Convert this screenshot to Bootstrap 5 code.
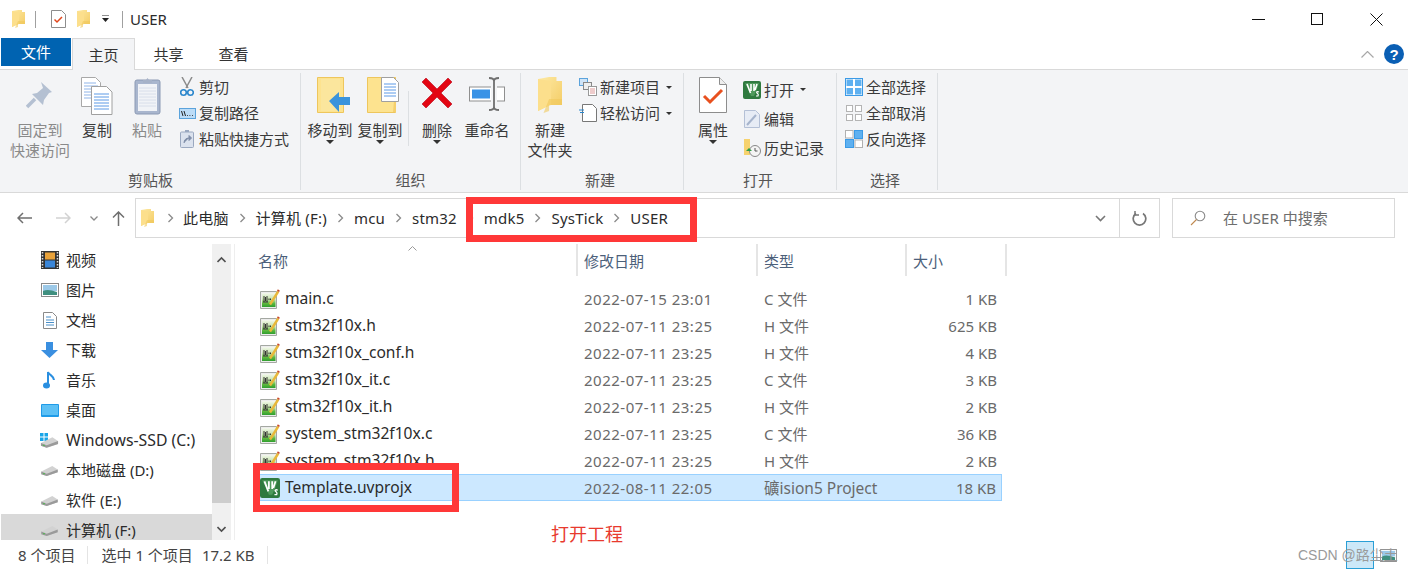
<!DOCTYPE html>
<html lang="zh-CN">
<head>
<meta charset="UTF-8">
<title>USER</title>
<link rel="stylesheet" href="https://cdn.jsdelivr.net/npm/bootstrap@5.3.0/dist/css/bootstrap.min.css">
<style>
html, body { width: 1408px; height: 571px; overflow: hidden; }
body { background: #fff; color: #2b2b2b; font: 15px/20px "Noto Sans", "Noto Sans CJK SC", sans-serif; position: relative; }
svg { display: block; flex: none; }
.sprite { position: absolute; }
.title-bar { height: 38px; padding-left: 12px; }
.title-sep { width: 1px; height: 17px; background: #a0a0a0; }
.sep-a { margin-left: 10px; }
.t-note { margin-left: 15px; }
.t-fold { margin-left: 11px; }
.t-caret { margin-left: 11px; }
.sep-b { margin-left: 12px; }
.t-name { margin-left: 7px; }
.win-group { padding-right: 2px; }
.win-btn { width: 59px; }
.tab-bar { height: 32px; position: relative; }
.tab-file { width: 70px; height: 28px; margin-left: 1px; background: #0063b1; color: #fff; }
.tab-item { width: 65px; height: 32px; color: #333; }
.tab-home { width: 63px; margin-left: 1px; background: #f3f4f6; border: 1px solid #d9d9d9; border-bottom: 0; position: relative; z-index: 1; }
.tab-share { margin-left: 1px; }
.tab-tools { height: 32px; padding-right: 4px; gap: 10px; }
.ribbon { height: 124px; background: #f3f4f6; border-top: 1px solid #d9d9d9; border-bottom: 1px solid #d9d9d9; margin-top: -1px; padding: 3px 0 2px 1px; }
.rb-group { border-right: 1px solid #dcdfe2; height: 117px; }
.rb-body { height: 97px; padding-left: 4px; }
.body-g1 { padding-left: 9px; }
.rb-label { color: #555; line-height: 20px; height: 20px; }
.label-left { padding-right: 4px; }
.g1 { width: 300px; } .g2 { width: 220px; } .g3 { width: 163px; } .g4 { width: 153px; } .g5 { width: 101px; }
.big-btn { width: 50px; padding-top: 4px; line-height: 20px; text-align: center; color: #3a3a3a; white-space: nowrap; }
.big-icon { height: 40px; margin-bottom: 3px; }
.w60 { width: 60px; } .w54 { width: 54px; } .w46 { width: 46px; }
.off { color: #8a8a8a; }
.pin-ico { margin-top: 3px; }
.nudge { margin-left: 6px; }
.down-caret { width: 0; height: 0; margin: 0 auto; border: 4px solid transparent; border-top-color: #333; border-bottom: 0; }
.rb-sep { width: 1px; height: 55px; background: #dcdfe2; margin: 18px 3px 0; }
.sm-col { padding-top: 1px; white-space: nowrap; }
.sm-item { height: 26px; color: #3a3a3a; gap: 1px; }
.sm-col.sm-tall { padding-top: 2px; }
.sm-tall .sm-item { height: 29px; }
.sm-ico { width: 22px; }
.pl-g1 { padding-left: 6px; } .pl-g3 { padding-left: 2px; } .pl-g4 { padding-left: 3px; } .pl-g5 { padding-left: 2px; }
.small-caret { width: 0; height: 0; margin-left: 5px; border: 3.5px solid transparent; border-top-color: #333; border-bottom: 0; }
.addr-row { height: 51px; padding-top: 5px; }
.nav-arrows { width: 135px; height: 40px; padding-left: 17px; }
.arrow-fwd { margin-left: 24px; }
.arrow-down { margin-left: 19px; }
.arrow-up { margin-left: 14px; }
.addr-box { width: 1025px; height: 40px; border: 1px solid #d9d9d9; }
.crumb { gap: 10px; padding-left: 5px; color: #2b2b2b; white-space: nowrap; letter-spacing: .2px; }
.crumb-fold { margin-right: 3px; }
.crumb-first { margin-left: -1px; }
.addr-drop { margin-right: 13px; }
.addr-end { width: 40px; height: 38px; border-left: 1px solid #d9d9d9; }
.search-box { width: 223px; height: 40px; margin-left: 12px; border: 1px solid #d9d9d9; color: #6d6d6d; padding-left: 17px; gap: 17px; }
.main-area { height: 296px; }
.nav-pane { width: 231px; height: 296px; overflow: hidden; }
.nav-list { width: 212px; }
.nav-row { height: 30px; padding: 2px 0 0 41px; gap: 5px; white-space: nowrap; }
.nav-icon { width: 20px; }
.ni-in { margin-left: 2px; }
.ni-out { margin-left: -1px; }
.nav-sel { background: #d9d9d9; margin-left: 1px; padding-left: 40px; }
.ls-wide { font-size: 15.8px; }
.nav-scroll { width: 19px; background: #f0f0f0; padding-top: 186px; position: relative; }
.nav-thumb { height: 73px; background: #cdcdcd; }
.scroll-arrow { position: absolute; left: 5px; width: 9px; height: 9px; }
.sa-top { top: 11px; }
.sa-bot { top: 281px; }
.pane-line { width: 1px; background: #eee; margin-left: 3px; }
.file-pane { margin-left: 19px; width: 760px; position: relative; }
.file-head { display: grid; grid-template-columns: 324px 180px 149px 100px; height: 32px; margin-bottom: 9px; color: #4c607a; }
.fh-cell { height: 32px; line-height: 34px; border-right: 2px solid #e5e5e5; padding-left: 6px; }
.fh-cell.first { padding-left: 4px; }
.file-grid { display: grid; grid-template-columns: 323px 180px 149px 96px; width: 748px; }
.sort-up { position: absolute; left: 154px; top: 2px; }
.file-row { display: contents; }
.file-row > div { height: 27px; line-height: 29px; white-space: nowrap; color: #6a6a6a; padding-left: 7px; }
.file-row > .name-cell { color: #2b2b2b; padding-left: 6px; display: flex; align-items: center; gap: 5px; font-size: 15.6px; }
.file-row > .date-cell { letter-spacing: .5px; }
.file-row > .type-wide { font-size: 15.5px; }
.file-row > .size-cell { text-align: right; padding-right: 5px; }
.row-sel > div { background: #cce8ff; border-top: 1px solid #99d1ff; border-bottom: 1px solid #99d1ff; line-height: 27px; }
.row-sel > div:last-child { border-right: 1px solid #99d1ff; }
.row-sel > .name-cell { border-left: 1px solid #99d1ff; padding-left: 5px; }
.status-bar { height: 30px; padding-left: 18px; color: #444; white-space: nowrap; }
.status-sep { width: 1px; height: 18px; background: #e4e4e4; }
.ss-a { margin: 0 13px 0 12px; }
.ss-b { margin-left: 12px; }
.st-size { margin-left: 9px; }
.red-frame { position: absolute; border: 7px solid #ff3838; z-index: 5; }
.frame-addr { left: 466px; top: 197px; width: 231px; height: 45px; }
.frame-file { left: 253px; top: 463px; width: 206px; height: 49px; }
.open-note { position: absolute; left: 551px; top: 523px; color: #e83a2e; font-size: 18px; line-height: 22px; z-index: 5; }
.mark-text { position: absolute; left: 1298px; top: 546px; color: #9a9a9a; font: 14px/18px "Liberation Sans", "Noto Sans CJK SC", sans-serif; z-index: 6; }
.mark-thumb { position: absolute; left: 1346px; top: 541px; width: 28px; height: 28px; background: #cce8f8; border: 1px solid #2a9fd6; z-index: 5; }
.mark-pic { position: absolute; left: 1380px; top: 549px; z-index: 5; }
</style>
</head>
<body>

<svg class="sprite" width="0" height="0">
  <defs>
    <linearGradient id="gFold" x1="0" y1="0" x2="1" y2="1"><stop offset="0" stop-color="#fdeaa6"/><stop offset="1" stop-color="#f4cb62"/></linearGradient>
    <linearGradient id="gSrc" x1="0" y1="0" x2="0" y2="1"><stop offset="0" stop-color="#f4f8ee"/><stop offset=".45" stop-color="#c4e3a8"/><stop offset=".75" stop-color="#5cb83e"/><stop offset="1" stop-color="#2f9e2f"/></linearGradient>
    <symbol id="i-fold" viewBox="0 0 13 18"><path d="M0 1 6 0h4v2h3v12H6l-6 3z" fill="url(#gFold)"/><path d="M7 2 0 1v16l7-3z" fill="#fcdf8c"/><path d="M13 11v3H6v3l-3 1 3-7z" fill="#f0c85c" opacity=".6"/></symbol>
    <symbol id="i-src" viewBox="0 0 20 20"><path d="M.5 2.500h16v17H.5z" fill="#ececec" stroke="#a4a8a2"/><rect x="2" y="4" width="13.500" height="14" fill="url(#gSrc)"/><path d="M4 7v6M5.500 8v4M7 7v6M9 9.500v1.500M10.500 9.500v1.500" stroke="#333"/><path d="M3 13h5" stroke="#333"/><path d="M10 15.500 18.200 2.500" stroke="#e8b83a" stroke-width="2.400"/><path d="M18 2.400l.9-1.400" stroke="#c74a2a" stroke-width="2.400"/></symbol>
    <symbol id="i-keil" viewBox="0 0 18 18"><rect width="18" height="18" rx="2" fill="#2f7a3f"/><path d="M2 2h14l-2 6-3 7H8L5 8z" fill="#4f9a5c"/><path d="M4 3l3.500 9M8 3v7M11 3v7M14 3l-2 6" stroke="#fff" stroke-width="1.600" fill="none"/><path d="M16 11c-2-1-3 0-2 1s2 1 1 3h-2" stroke="#fff" stroke-width="1.200" fill="none"/></symbol>
    <symbol id="i-drive" viewBox="0 0 20 12"><path d="M1 7 13 1l6 4v3L7 12 1 10z" fill="#d2d2d2"/><path d="M1 7 7 9.500 19 5v3L7 12 1 10z" fill="#9a9a9a"/><path d="M3 9.500h2" stroke="#3fbf3f"/></symbol>
    <symbol id="i-chev" viewBox="0 0 7 10"><path d="M1.500 1l4 4-4 4" fill="none" stroke="#8a8a8a" stroke-width="1.300"/></symbol>
  </defs>
</svg>

<div class="title-bar d-flex align-items-center">
  <svg width="13" height="18"><use href="#i-fold"/></svg>
  <div class="title-sep sep-a"></div>
  <svg class="t-note" width="15" height="18" viewBox="0 0 15 18"><path d="M.500.500h10l4 4v13H.500z" fill="#fff" stroke="#8d8d8d"/><path d="M3.500 9.500l2.500 2.500 5-5" stroke="#e0461c" stroke-width="1.500" fill="none"/></svg>
  <svg class="t-fold" width="13" height="18"><use href="#i-fold"/></svg>
  <svg class="t-caret" width="9" height="8" viewBox="0 0 9 8"><path d="M1 0h7" stroke="#222"/><path d="M1 3h7L4.500 7z" fill="#222"/></svg>
  <div class="title-sep sep-b"></div>
  <span class="t-name">USER</span>
  <div class="ms-auto d-flex align-items-center win-group">
    <div class="win-btn d-flex justify-content-center"><svg width="13" height="13" viewBox="0 0 13 13"><path d="M0 6.500h13" stroke="#111"/></svg></div>
    <div class="win-btn d-flex justify-content-center"><svg width="13" height="13" viewBox="0 0 13 13"><rect x=".5" y=".5" width="11" height="11" fill="none" stroke="#111"/></svg></div>
    <div class="win-btn d-flex justify-content-center"><svg width="13" height="13" viewBox="0 0 13 13"><path d="M.500.500l12 12M12.500.500l-12 12" stroke="#111"/></svg></div>
  </div>
</div>

<div class="tab-bar d-flex align-items-start">
  <div class="tab-file d-flex align-items-center justify-content-center">文件</div>
  <div class="tab-item tab-home d-flex align-items-center justify-content-center">主页</div>
  <div class="tab-item tab-share d-flex align-items-center justify-content-center">共享</div>
  <div class="tab-item d-flex align-items-center justify-content-center">查看</div>
  <div class="ms-auto d-flex align-items-center tab-tools">
    <svg width="13" height="7" viewBox="0 0 13 7"><path d="M.500 6.500l6-6 6 6" fill="none" stroke="#a8a8a8" stroke-width="1.200"/></svg>
    <svg width="20" height="20" viewBox="0 0 20 20"><circle cx="10" cy="10" r="10" fill="#0a5fb4"/><text x="10" y="15.500" text-anchor="middle" fill="#fff" font-family="Liberation Sans" font-weight="700" font-size="15">?</text></svg>
  </div>
</div>

<div class="ribbon d-flex">
  <div class="rb-group g1 d-flex flex-column">
    <div class="rb-body body-g1 d-flex">
      <div class="big-btn w60 off">
        <div class="big-icon d-flex justify-content-center"><svg class="pin-ico" width="28" height="30" viewBox="0 0 28 30"><path d="M15 2l11 10-3 1-5 7-1 5L6 14l5-1 6-5z" fill="#b4c0d2"/><path d="M9 19 1 27" stroke="#b4c0d2" stroke-width="3.500"/></svg></div>
        固定到<br>快速访问
      </div>
      <div class="big-btn w54">
        <div class="big-icon d-flex justify-content-center"><svg width="32" height="38" viewBox="0 0 32 38"><path d="M.500.500h14l5 5v24H.500z" fill="#fff" stroke="#a8a8a8"/><path d="M3 6h12M3 9h14M3 12h14M3 15h14M3 18h14M3 21h14" stroke="#8fb4e8"/><path d="M10.500 9.500h15l5.500 5.500v22.500H10.500z" fill="#fff" stroke="#a0a0a0"/><path d="M13 17h15M13 20h15M13 23h15M13 26h15M13 29h15M13 32h15" stroke="#5d9ae6"/></svg></div>
        复制
      </div>
      <div class="big-btn w46 off">
        <div class="big-icon d-flex justify-content-center"><svg width="27" height="38" viewBox="0 0 27 38"><rect x="1" y="3" width="25" height="34" rx="2" fill="#a9b6ce" stroke="#8c9ab4"/><rect x="4" y="7" width="19" height="27" fill="#f1f3f7"/><path d="M5 11h17M5 14h17M5 17h17M5 20h17M5 23h17M5 26h17M5 29h17" stroke="#d8deea"/><path d="M9 6V3h3l1.500-2 1.500 2h3v3z" fill="#a6b2c8"/></svg></div>
        粘贴
      </div>
      <div class="sm-col pl-g1">
        <div class="sm-item d-flex align-items-center"><div class="sm-ico d-flex justify-content-center"><svg width="14" height="20" viewBox="0 0 14 20"><path d="M2 0l6 11M12 0 6 11" stroke="#8a8a8a" stroke-width="1.500"/><circle cx="3.500" cy="15.500" r="2.800" fill="none" stroke="#2a86cc" stroke-width="1.600"/><circle cx="10.500" cy="15.500" r="2.800" fill="none" stroke="#2a86cc" stroke-width="1.600"/></svg></div>剪切</div>
        <div class="sm-item d-flex align-items-center"><div class="sm-ico d-flex justify-content-center"><svg width="17" height="11" viewBox="0 0 17 11"><rect x=".5" y=".5" width="16" height="10" fill="#bcdcf7" stroke="#5ba3dc"/><path d="M2.500 3l1.500 5M5 3l1.500 5M8 7.500h.8M10.500 7.500h.8M13 7.500h.8" stroke="#222"/></svg></div>复制路径</div>
        <div class="sm-item d-flex align-items-center off"><div class="sm-ico d-flex justify-content-center"><svg width="14" height="18" viewBox="0 0 14 18"><rect x=".5" y="2" width="13" height="15.500" rx="1" fill="#dbe2ee" stroke="#9aa8c0"/><path d="M5 2V0h4v2" fill="#9aa8c0"/><path d="M4 13c0-3 2-5 5-5M9 5.500v5l2.500-2.500z" stroke="#7f8da8" fill="#7f8da8"/></svg></div>粘贴快捷方式</div>
      </div>
    </div>
    <div class="rb-label text-center">剪贴板</div>
  </div>

  <div class="rb-group g2 d-flex flex-column">
    <div class="rb-body d-flex">
      <div class="big-btn">
        <div class="big-icon d-flex justify-content-center"><svg class="nudge" width="33" height="38" viewBox="0 0 33 38"><path d="M.500.500h26v35H.500z" fill="#fde38f" stroke="#eec65c"/><path d="M4 2h19v32H4z" fill="#fbe69d"/><path d="M12 24 22 15v5h11v8H22v7z" fill="#3a93dc"/></svg></div>
        移动到<div class="down-caret"></div>
      </div>
      <div class="big-btn">
        <div class="big-icon d-flex justify-content-center"><svg class="nudge" width="33" height="38" viewBox="0 0 33 38"><path d="M.500.500h28v35H.500z" fill="#fde38f" stroke="#eec65c"/><path d="M27 24c2-3 3-1 2 2v9h-3z" fill="#f5cf6c"/><path d="M14.500.500h12l5 5v19h-17z" fill="#fff" stroke="#a0a0a0"/><path d="M17 7h12M17 10h12M17 13h12M17 16h12M17 19h12" stroke="#5d9ae6"/></svg></div>
        复制到<div class="down-caret"></div>
      </div>
      <div class="rb-sep"></div>
      <div class="big-btn">
        <div class="big-icon d-flex justify-content-center"><svg width="32" height="32" viewBox="0 0 32 32"><path d="M5 1l11 11L27 1l4 4-11 11 11 11-4 4-11-11L5 31l-4-4 11-11L1 5z" fill="#e30613" stroke="#b9071a" stroke-width=".6"/></svg></div>
        删除<div class="down-caret"></div>
      </div>
      <div class="big-btn">
        <div class="big-icon d-flex justify-content-center"><svg width="36" height="34" viewBox="0 0 36 34"><rect x=".5" y="10" width="35" height="14" fill="#fff" stroke="#8f8f8f"/><rect x="3" y="12.500" width="18" height="9" fill="#3a93e6"/><rect x="22" y="3" width="6" height="28" fill="#f3f4f6"/><path d="M20 1c3 0 5 1 5 3v26c0 2 2 3 5 3M30 1c-3 0-5 1-5 3M20 33c3 0 5-1 5-3" fill="none" stroke="#6f6f6f" stroke-width="1.800"/></svg></div>
        重命名
      </div>
    </div>
    <div class="rb-label text-center">组织</div>
  </div>

  <div class="rb-group g3 d-flex flex-column">
    <div class="rb-body d-flex">
      <div class="big-btn">
        <div class="big-icon d-flex justify-content-center"><svg width="24" height="36" viewBox="0 0 13 18" preserveAspectRatio="none"><use href="#i-fold"/></svg></div>
        新建<br>文件夹
      </div>
      <div class="sm-col pl-g3">
        <div class="sm-item d-flex align-items-center"><div class="sm-ico d-flex justify-content-center"><svg width="18" height="18" viewBox="0 0 18 18"><rect x=".5" y=".5" width="8" height="7" fill="#cfe4f7" stroke="#5ba3dc"/><rect x="4.500" y="4.500" width="8" height="7" fill="#eee" stroke="#888"/><rect x="9.500" y="8.500" width="8" height="9" fill="#fff" stroke="#999"/><path d="M11 11h5M11 13h5M11 15h5" stroke="#d99"/></svg></div>新建项目<div class="small-caret"></div></div>
        <div class="sm-item d-flex align-items-center"><div class="sm-ico d-flex justify-content-center"><svg width="18" height="18" viewBox="0 0 18 18"><path d="M3.500.500h10l4 4v13h-14z" fill="#fff" stroke="#777"/><path d="M0 6h5M1 8.500h4" stroke="#2a86cc"/></svg></div>轻松访问<div class="small-caret"></div></div>
      </div>
    </div>
    <div class="rb-label label-left text-center">新建</div>
  </div>

  <div class="rb-group g4 d-flex flex-column">
    <div class="rb-body d-flex">
      <div class="big-btn">
        <div class="big-icon d-flex justify-content-center"><svg width="28" height="36" viewBox="0 0 28 36"><path d="M.500.500h20l7 7v28H.500z" fill="#fff" stroke="#8d8d8d"/><path d="M20.500.500v7h7" fill="#eee" stroke="#8d8d8d"/><path d="M5 19l6 6 12-12" stroke="#e8501f" stroke-width="3" fill="none"/></svg></div>
        属性<div class="down-caret"></div>
      </div>
      <div class="sm-col sm-tall pl-g4">
        <div class="sm-item d-flex align-items-center"><div class="sm-ico d-flex justify-content-center"><svg width="18" height="18"><use href="#i-keil"/></svg></div>打开<div class="small-caret"></div></div>
        <div class="sm-item d-flex align-items-center off"><div class="sm-ico d-flex justify-content-center"><svg width="16" height="18" viewBox="0 0 16 18"><path d="M.500.500h11l4 4v13H.500z" fill="#e7ecf5" stroke="#b4c0d6"/><path d="M3 15 12 5" stroke="#a6b4cc" stroke-width="2"/></svg></div>编辑</div>
        <div class="sm-item d-flex align-items-center"><div class="sm-ico d-flex justify-content-center"><svg width="17" height="18" viewBox="0 0 17 18"><path d="M0 0h6v16H0z" fill="#f6d26e"/><circle cx="11" cy="12" r="5.500" fill="#f4f4f4" stroke="#888"/><path d="M11 9v3h2.500" stroke="#555" fill="none"/><path d="M2 12l3-3 3 3z" fill="#2f9e44"/></svg></div>历史记录</div>
      </div>
    </div>
    <div class="rb-label label-left text-center">打开</div>
  </div>

  <div class="rb-group g5 d-flex flex-column">
    <div class="rb-body d-flex">
      <div class="sm-col pl-g5">
        <div class="sm-item d-flex align-items-center"><div class="sm-ico d-flex justify-content-center"><svg width="18" height="18" viewBox="0 0 18 18"><rect x=".5" y=".5" width="17" height="17" fill="#fff" stroke="#3b9ae6"/><rect x="1.500" y="1.500" width="6.500" height="6.500" fill="#5eb0f0"/><rect x="10" y="1.500" width="6.500" height="6.500" fill="#5eb0f0"/><rect x="1.500" y="10" width="6.500" height="6.500" fill="#5eb0f0"/><rect x="10" y="10" width="6.500" height="6.500" fill="#5eb0f0"/></svg></div>全部选择</div>
        <div class="sm-item d-flex align-items-center"><div class="sm-ico d-flex justify-content-center"><svg width="18" height="18" viewBox="0 0 18 18" fill="#fff" stroke="#b4b4b4"><rect x="1.500" y="1.500" width="6" height="6"/><rect x="10.500" y="1.500" width="6" height="6"/><rect x="1.500" y="10.500" width="6" height="6"/><rect x="10.500" y="10.500" width="6" height="6"/></svg></div>全部取消</div>
        <div class="sm-item d-flex align-items-center"><div class="sm-ico d-flex justify-content-center"><svg width="18" height="18" viewBox="0 0 18 18"><rect x=".5" y=".5" width="7.500" height="7.500" fill="#fff" stroke="#b0b0b0"/><rect x="9.500" y=".5" width="8" height="8" fill="#5eb0f0" stroke="#3b9ae6"/><rect x=".5" y="9.500" width="8" height="8" fill="#5eb0f0" stroke="#3b9ae6"/><rect x="10" y="10" width="7.500" height="7.500" fill="#fff" stroke="#b0b0b0"/></svg></div>反向选择</div>
      </div>
    </div>
    <div class="rb-label label-left text-center">选择</div>
  </div>
</div>

<div class="addr-row d-flex">
  <div class="nav-arrows d-flex align-items-center">
    <svg width="15" height="12" viewBox="0 0 15 12"><path d="M15 6H1M6 1 1 6l5 5" fill="none" stroke="#6f6f6f" stroke-width="1.500"/></svg>
    <svg class="arrow-fwd" width="15" height="12" viewBox="0 0 15 12"><path d="M0 6h14M9 1l5 5-5 5" fill="none" stroke="#d2d2d2" stroke-width="1.500"/></svg>
    <svg class="arrow-down" width="8" height="5" viewBox="0 0 8 5"><path d="M.500.500 4 4 7.500.500" fill="none" stroke="#8a8a8a" stroke-width="1.300"/></svg>
    <svg class="arrow-up" width="13" height="15" viewBox="0 0 13 15"><path d="M6.500 15V1M1 6.500l5.500-5.500 5.500 5.500" fill="none" stroke="#6f6f6f" stroke-width="1.500"/></svg>
  </div>
  <div class="addr-box d-flex align-items-center">
    <div class="crumb d-flex align-items-center flex-grow-1">
      <svg class="crumb-fold" width="13" height="18"><use href="#i-fold"/></svg>
      <svg width="7" height="10"><use href="#i-chev"/></svg>
      <span class="crumb-first">此电脑</span>
      <svg width="7" height="10"><use href="#i-chev"/></svg>
      <span>计算机 (F:)</span>
      <svg width="7" height="10"><use href="#i-chev"/></svg>
      <span>mcu</span>
      <svg width="7" height="10"><use href="#i-chev"/></svg>
      <span>stm32</span>
      <svg width="7" height="10"><use href="#i-chev"/></svg>
      <span>mdk5</span>
      <svg width="7" height="10"><use href="#i-chev"/></svg>
      <span>SysTick</span>
      <svg width="7" height="10"><use href="#i-chev"/></svg>
      <span>USER</span>
    </div>
    <svg class="addr-drop" width="11" height="7" viewBox="0 0 11 7"><path d="M1 1l4.500 4.500L10 1" fill="none" stroke="#777" stroke-width="1.600"/></svg>
    <div class="addr-end d-flex align-items-center justify-content-center"><svg width="15" height="16" viewBox="0 0 15 16"><path d="M4 3.500a6.300 6.300 0 1 0 7 0" fill="none" stroke="#777" stroke-width="1.700"/><path d="M3 1v4h4" fill="none" stroke="#777" stroke-width="1.500"/></svg></div>
  </div>
  <div class="search-box d-flex align-items-center">
    <svg width="16" height="16" viewBox="0 0 16 16"><circle cx="10" cy="6" r="4.800" fill="none" stroke="#8a8a8a" stroke-width="1.100"/><path d="M6.500 9.500 1 15" stroke="#c08a50" stroke-width="1.100"/></svg>
    <span>在 USER 中搜索</span>
  </div>
</div>

<div class="main-area d-flex">
  <div class="nav-pane d-flex">
    <div class="nav-list">
      <div class="nav-row d-flex align-items-center"><div class="nav-icon"><svg width="18" height="18" viewBox="0 0 18 18"><rect width="18" height="18" fill="#333"/><path d="M1.500 1v16M16.500 1v16" stroke="#ddd" stroke-dasharray="1.500 1.500" stroke-width="1.500"/><rect x="4" y="1.500" width="10" height="7" fill="#e8a23a"/><rect x="4" y="9.500" width="10" height="7" fill="#3a86d8"/></svg></div>视频</div>
      <div class="nav-row d-flex align-items-center"><div class="nav-icon"><svg width="18" height="14" viewBox="0 0 18 14"><rect x=".5" y=".5" width="17" height="13" fill="#fff" stroke="#8a8a8a"/><rect x="2" y="2" width="14" height="6" fill="#9cc9e8"/><path d="M2 8c4-2 8-1 14 1v3H2z" fill="#3f8f7f"/></svg></div>图片</div>
      <div class="nav-row d-flex align-items-center"><div class="nav-icon"><svg class="ni-in" width="14" height="17" viewBox="0 0 14 17"><path d="M.500.500h9l4 4v12H.500z" fill="#fff" stroke="#8a8a8a"/><path d="M3 5h5M3 8h8M3 10.500h8M3 13h8" stroke="#4a8fc8"/></svg></div>文档</div>
      <div class="nav-row d-flex align-items-center"><div class="nav-icon"><svg width="17" height="16" viewBox="0 0 17 16"><path d="M5 0h7v8h5l-8.500 8L0 8h5z" fill="#3a8fe0"/></svg></div>下载</div>
      <div class="nav-row d-flex align-items-center"><div class="nav-icon"><svg class="ni-in" width="14" height="18" viewBox="0 0 14 18"><path d="M5 14V1c1 3 6 4 6 8" fill="none" stroke="#2a8fe0" stroke-width="2"/><ellipse cx="3.500" cy="14.500" rx="3.500" ry="3" fill="#2a8fe0"/></svg></div>音乐</div>
      <div class="nav-row d-flex align-items-center"><div class="nav-icon"><svg width="18" height="13" viewBox="0 0 18 13"><rect width="18" height="13" rx="1" fill="#1f9be8"/><rect x="1" y="1" width="16" height="10" fill="#5cc0f5"/></svg></div>桌面</div>
      <div class="nav-row d-flex align-items-center"><div class="nav-icon"><svg class="ni-out" width="19" height="16" viewBox="0 0 19 16"><path d="M0 1h3.500v3.500H0zM4.500 1H8v3.500H4.500zM0 5.500h3.500V9H0zM4.500 5.500H8V9H4.500z" fill="#19a5e8"/><use href="#i-drive" y="4" width="19" height="12"/></svg></div><span class="ls-wide">Windows-SSD (C:)</span></div>
      <div class="nav-row d-flex align-items-center"><div class="nav-icon"><svg class="ni-out" width="19" height="11"><use href="#i-drive"/></svg></div>本地磁盘 (D:)</div>
      <div class="nav-row d-flex align-items-center"><div class="nav-icon"><svg class="ni-out" width="19" height="11"><use href="#i-drive"/></svg></div>软件 (E:)</div>
      <div class="nav-row nav-sel d-flex align-items-center"><div class="nav-icon"><svg class="ni-out" width="19" height="11"><use href="#i-drive"/></svg></div>计算机 (F:)</div>
    </div>
    <div class="nav-scroll">
      <svg class="scroll-arrow sa-top" viewBox="0 0 9 9"><path d="M.500 7 4.500 3l4 4" fill="none" stroke="#505050" stroke-width="1.600"/></svg>
      <div class="nav-thumb"></div>
      <svg class="scroll-arrow sa-bot" viewBox="0 0 9 9"><path d="M.500 2l4 4 4-4" fill="none" stroke="#505050" stroke-width="1.600"/></svg>
    </div>
  </div>
  <div class="pane-line"></div>
  <div class="file-pane">
    <svg class="sort-up" width="9" height="5" viewBox="0 0 9 5"><path d="M.500 4.500l4-4 4 4" fill="none" stroke="#9a9a9a"/></svg>
    <div class="file-head">
      <div class="fh-cell first">名称</div>
      <div class="fh-cell">修改日期</div>
      <div class="fh-cell">类型</div>
      <div class="fh-cell">大小</div>
    </div>
    <div class="file-grid">
      <div class="file-row"><div class="name-cell"><svg width="20" height="20"><use href="#i-src"/></svg>main.c</div><div class="date-cell">2022-07-15 23:01</div><div>C 文件</div><div class="size-cell">1 KB</div></div>
      <div class="file-row"><div class="name-cell"><svg width="20" height="20"><use href="#i-src"/></svg>stm32f10x.h</div><div class="date-cell">2022-07-11 23:25</div><div>H 文件</div><div class="size-cell">625 KB</div></div>
      <div class="file-row"><div class="name-cell"><svg width="20" height="20"><use href="#i-src"/></svg>stm32f10x_conf.h</div><div class="date-cell">2022-07-11 23:25</div><div>H 文件</div><div class="size-cell">4 KB</div></div>
      <div class="file-row"><div class="name-cell"><svg width="20" height="20"><use href="#i-src"/></svg>stm32f10x_it.c</div><div class="date-cell">2022-07-11 23:25</div><div>C 文件</div><div class="size-cell">3 KB</div></div>
      <div class="file-row"><div class="name-cell"><svg width="20" height="20"><use href="#i-src"/></svg>stm32f10x_it.h</div><div class="date-cell">2022-07-11 23:25</div><div>H 文件</div><div class="size-cell">2 KB</div></div>
      <div class="file-row"><div class="name-cell"><svg width="20" height="20"><use href="#i-src"/></svg>system_stm32f10x.c</div><div class="date-cell">2022-07-11 23:25</div><div>C 文件</div><div class="size-cell">36 KB</div></div>
      <div class="file-row"><div class="name-cell"><svg width="20" height="20"><use href="#i-src"/></svg>system_stm32f10x.h</div><div class="date-cell">2022-07-11 23:25</div><div>H 文件</div><div class="size-cell">2 KB</div></div>
      <div class="file-row row-sel"><div class="name-cell"><svg width="20" height="20"><use href="#i-keil"/></svg>Template.uvprojx</div><div class="date-cell">2022-08-11 22:05</div><div class="type-wide">礦ision5 Project</div><div class="size-cell">18 KB</div></div>
    </div>
  </div>
</div>

<div class="status-bar d-flex align-items-center">
  <span>8 个项目</span>
  <div class="status-sep ss-a"></div>
  <span>选中 1 个项目</span>
  <span class="st-size">17.2 KB</span>
  <div class="status-sep ss-b"></div>
</div>

<div class="red-frame frame-addr"></div>
<div class="red-frame frame-file"></div>
<div class="open-note">打开工程</div>
<div class="mark-thumb"></div>
<div class="mark-text">CSDN @路尘土</div>
<svg class="mark-pic" width="17" height="13" viewBox="0 0 18 14"><rect x=".5" y=".5" width="17" height="13" fill="#fff" stroke="#8a8a8a"/><rect x="2" y="2" width="14" height="6" fill="#9cc9e8"/><path d="M2 8c4-2 8-1 14 1v3H2z" fill="#3f8f7f"/></svg>

<script src="https://cdn.jsdelivr.net/npm/bootstrap@5.3.0/dist/js/bootstrap.bundle.min.js"></script>
</body>
</html>
